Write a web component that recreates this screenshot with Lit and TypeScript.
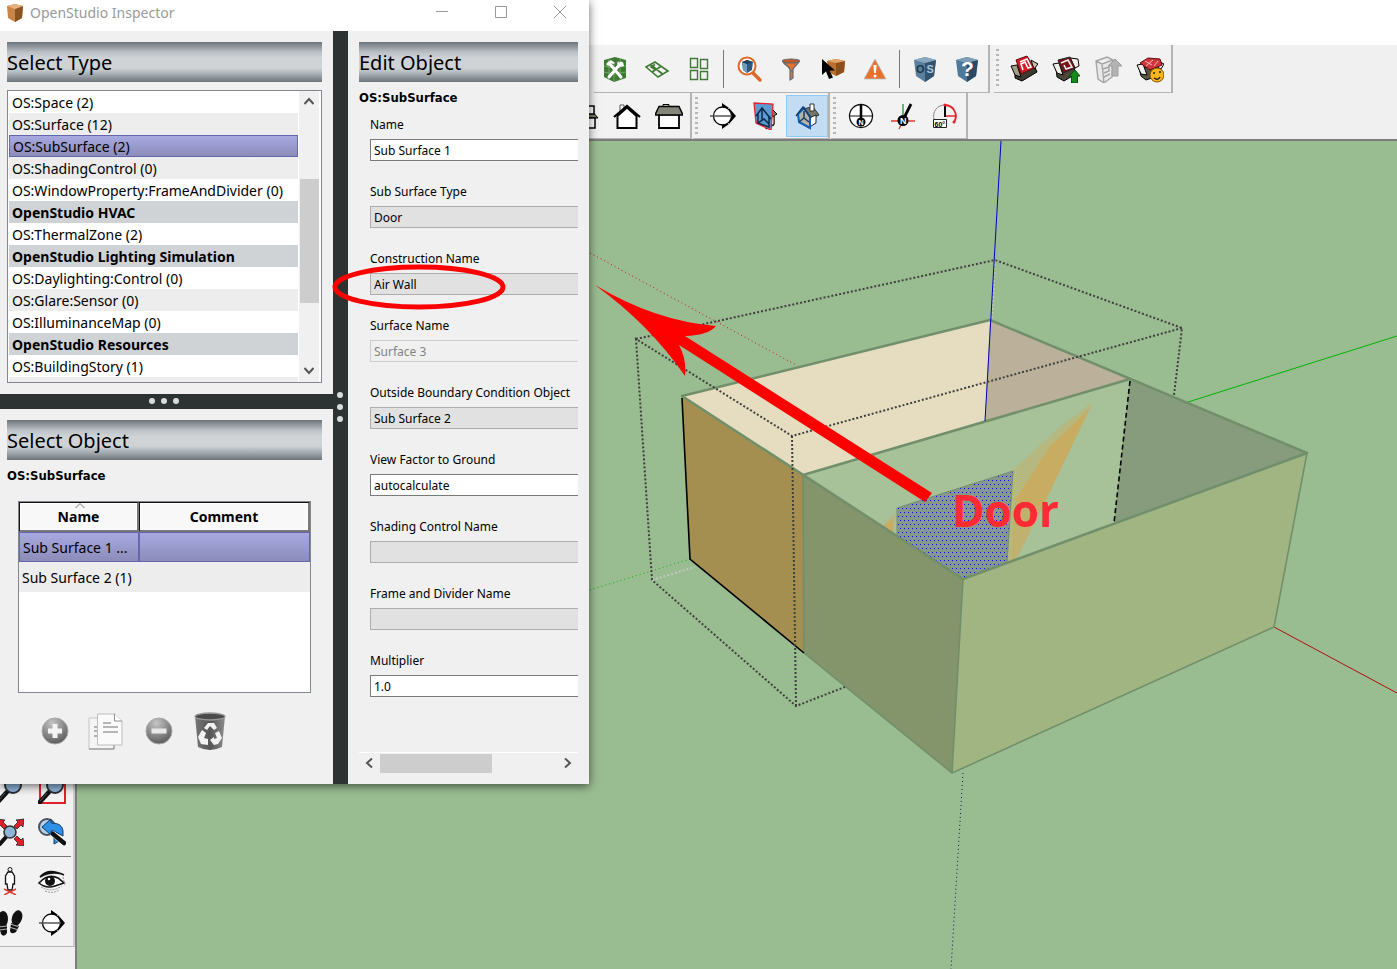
import { LitElement, html, css, svg, nothing } from "lit";
import { customElement, state } from "lit/decorators.js";
import { classMap } from "lit/directives/class-map.js";

const HOUSE_SIDE = svg`<path d="M4 12.500h20V26H4z" fill="#fff" stroke="#000" stroke-width="1.800"/><path d="M8 6V2.500h6V6" fill="#ddd" stroke="#000"/><path d="M4 4.500h20l4 8.500H0z" fill="#85867a" stroke="#000" stroke-width="1.400"/>`;

const MAGNIFIER = svg`<path d="M11 16 1 27" stroke="#111" stroke-width="4.500" stroke-linecap="round"/><path d="m9 17-7 8" stroke="#555" stroke-width="1"/><circle cx="17" cy="9" r="8" fill="#8fb4d8" stroke="#2b3036" stroke-width="2"/><path d="M12 8q2-5 7-4" fill="none" stroke="#d5e5f3" stroke-width="2"/>`;

const ICONS: Record<string, unknown> = {
  cubeTools: svg`<path d="M3 5 14 2l11 3v18l-12 4L3 22z" fill="#3f7a34"/><path d="M3 11l10 2 12-2M3 17l10 2 12-2M8 4v21M19 4v21M13 8v19" stroke="#7fae72" stroke-width=".8" fill="none"/><path d="m8 8 12 14M20 8 8 22" stroke="#fff" stroke-width="3" stroke-linecap="round"/><path d="M5 9l5-4 4 3-2 1-2-1-3 3zM17 6l2 3 3-2 1 4-4 1-3-3z" fill="#fff"/>`,
  mesh: svg`<path d="M3 12 12 7l13 9-10 6zM7.500 9.500l12 9.500M9 17l9-5.500M12 14.500 8 12l4-2.500" fill="none" stroke="#3f7a34" stroke-width="1.600"/>`,
  squares: svg`<path d="M5.500 3.500h7v9h-7zM15.500 4.500h7v9h-7zM5.500 15.500h7v9h-7zM15.500 16.500h7v8h-7z" fill="none" stroke="#3f7a34" stroke-width="1.400"/>`,
  magCube: svg`<path d="m18 18 7 7" stroke="#e0692a" stroke-width="3.500" stroke-linecap="round"/><circle cx="12" cy="11" r="8.500" fill="#fff" stroke="#e0692a" stroke-width="2"/><path d="m7 7 5-2 6 2-1 8-5 3-4-3z" fill="#31597e"/><path d="m7 7 5 2v9l-4-3z" fill="#6f9cc0"/><path d="m7 7 5-2 6 2-6 2z" fill="#243f59"/>`,
  funnel: svg`<path d="M6 6h16c0 4-6 5-6 9v8l-3 2V15c0-4-7-5-7-9z" fill="#e8702c" stroke="#56697a" stroke-width="1.100"/><ellipse cx="14" cy="6" rx="8.500" ry="2" fill="#c45a20" stroke="#56697a" stroke-width="1.200"/><path d="m13 15 1 1h2" stroke="#56697a" fill="none"/>`,
  selectCube: svg`<path d="m8 6 9-2 9 2-1 11-8 4-8-4z" fill="#b9702c"/><path d="m17 8 9-2-1 11-8 4z" fill="#8d4e1c"/><path d="m8 6 9-2 9 2-9 2z" fill="#e0a565"/><path d="M3 4v16l4-3.500L10 24l4-1.500-3.500-7H16z" fill="#000"/>`,
  warning: svg`<path d="M14 4 3 24h22z" fill="#e8702c" stroke="#b9bec2" stroke-width=".8"/><path d="M12.300 10h3.400l-.8 8h-1.800z" fill="#fff"/><circle cx="14" cy="21" r="1.500" fill="#fff"/>`,
  cubeOS: svg`<path d="m3 5 11-3 11 3-2 16-9 6-9-6z" fill="#5a7f9e"/><path d="m14 8 11-3-2 16-9 6z" fill="#33526d"/><path d="m3 5 11-3 11 3-11 3z" fill="#8aa9c0"/><text x="5" y="18" class="g" font-size="11" fill="#1d3448">O</text><text x="15.500" y="18" class="g" font-size="11" fill="#a7c3d8">S</text>`,
  cubeHelp: svg`<path d="m3 5 11-3 11 3-2 16-9 6-9-6z" fill="#4f7899"/><path d="m14 8 11-3-2 16-9 6z" fill="#2c4a64"/><path d="m3 5 11-3 11 3-11 3z" fill="#7f9fb8"/><text x="8" y="21" class="g" font-size="21" fill="#fff">?</text>`,
  box: svg`<path d="m5 13 19-3 3 7-15 9-7-3z" fill="#3d392e" stroke="#000"/><path d="m1 11 6-1 4 12-6-2z" fill="#a29c88" stroke="#000"/><path d="m21 5 7 4-4 5z" fill="#c9c3ad" stroke="#000"/><path d="m6 5 11-4 7 12-13 6z" fill="#d51c24" stroke="#5f0a0e"/><path d="m10 7 7-3 4 8-3 1-3-6-4 2 2 6" fill="none" stroke="#fff" stroke-width="1.600"/>`,
  boxUp: svg`<path d="m4 13 19-3-1 10-10 6-7-4z" fill="#4b4638" stroke="#000"/><path d="m1 9 6-1 4 12-6-2zM18 3l8 1 1 7-4 2z" fill="#f1efe8" stroke="#000"/><path d="m6 5 12-3 5 11-12 5z" fill="#77151a" stroke="#222"/><path d="m9 8 7-3 4 7-6 2-2-4" fill="none" stroke="#eee" stroke-width="1.600"/><path d="m23 15 5 6h-2.500v7h-6v-7H17z" fill="#178a1e" stroke="#04520a"/>`,
  boxGrey: svg`<path d="m2 6 11-4 6 3-1 17-8 6-6-4zM2 6l6 3 11-4M8 9l2 19M9 14l6-2v4l-5 2M10 22l6-3" fill="#e8e8e8" stroke="#a5a5a5" stroke-width="1.400"/><path d="m21 4 7 7h-4v10h-6V11h-4z" fill="#b3b3b3" stroke="#9c9c9c"/>`,
  boxFace: svg`<path d="m3 13 22-3-3 11-12 4-5-4z" fill="#5a5343" stroke="#000"/><path d="m1 10 6-1 4 11-6-1zM22 6l6 3-3 5-4-2z" fill="#eee" stroke="#000"/><path d="m4 8 8-5 12 1 2 6-12 5z" fill="#d1353b" stroke="#5f0a0e"/><path d="m9 6 7 4m-6 1 7-6m1 6 4-5" stroke="#f3b9bb"/><circle cx="21" cy="20" r="7" fill="#fbb51c" stroke="#7e5300"/><path d="M17 18h2m4-1h2m-7 6q4 3 6-1" stroke="#222" stroke-width="1.500" fill="none"/>`,
  houseTall: svg`<path d="M3 15 7 9h14l6 7H2z" fill="#77786a" stroke="#000"/><path d="M4 16h20v10H4zM14 4h9v8h-9z" fill="#fff" stroke="#000" stroke-width="1.500"/>`,
  houseFront: svg`<path d="M7 3h4v7H7z" fill="#fff" stroke="#555"/><path d="M4.500 14v12h19V14L14 5.500z" fill="#fff" stroke="#000" stroke-width="2"/><path d="M1 15 14 4l13 11" fill="none" stroke="#000" stroke-width="2.200"/>`,
  houseSide: HOUSE_SIDE,
  section: svg`<path d="m13 1 7 5-7 1zM27 14l-7-8v16zM13 27l7-5-7-1z" fill="#000"/><circle cx="13.500" cy="14" r="9" fill="#fff" stroke="#000" stroke-width="1.300"/><path d="M1 14h22" stroke="#555" stroke-width="1.500"/>`,
  sectionPlane: svg`<path d="m14 11 6-5 6 6-3 2v9l-8 4z" fill="#777867" stroke="#111"/><path d="m17 17 6-3v8l-6 4z" fill="#fff" stroke="#111"/><path d="m3 1 19 1-2 26-15-7z" fill="#5c9bd2" stroke="#e6222e" stroke-width="1.300"/><path d="m5 14 6-8 9 11M7 12v9l11 4V15M7 21l6-4 5 5M11 7v11" fill="none" stroke="#0d2a48" stroke-width="1.500"/>`,
  sectionCut: svg`<path d="m9 7 11-2 6 8-9 4z" fill="#777867" stroke="#333"/><path d="m16 16 7-3v8l-8 5z" fill="#fff" stroke="#222"/><path d="M17 2h4v7h-4z" fill="#fff" stroke="#333"/><path d="m5 12 6-6 6 9v11L6 20z" fill="#b9b1a4" stroke="#0d61b3" stroke-width="2"/><path d="m3 14 7-9 8 11M6 20l5-4 5 4M11 9v7" fill="none" stroke="#12406e" stroke-width="1.500"/>`,
  north: svg`<circle cx="14" cy="14" r="11.500" fill="#fff" stroke="#111" stroke-width="1.300"/><path d="M2 14h24" stroke="#111"/><path d="M14 2v16" stroke="#000" stroke-width="2.500"/><circle cx="14" cy="20" r="4.500" fill="#000"/><text x="11.500" y="22.500" class="g" font-size="7" fill="#fff">N</text>`,
  northTool: svg`<path d="M14 2v14" stroke="#6cb36c" stroke-width="2"/><path d="M2 19h24M14 19l-4 8" stroke="#e23b30" stroke-width="1.300"/><path d="m15 16 7-14" stroke="#000" stroke-width="2.800"/><circle cx="14" cy="18.500" r="5.500" fill="#000"/><text x="11" y="22" class="g" font-size="9" fill="#fff">N</text>`,
  northAngle: svg`<path d="M3 17a11 11 0 0 1 11-14" fill="none" stroke="#888"/><path d="M14 3a11 11 0 0 1 9 17" fill="none" stroke="#e6222e" stroke-width="1.800"/><path d="M14 14h11" stroke="#e6222e" stroke-width="1.500"/><path d="M14 3v12" stroke="#000" stroke-width="2"/><circle cx="14" cy="3" r="1.500" fill="#e6222e"/><circle cx="23" cy="20" r="1.500" fill="#e6222e"/><path d="M2.500 17.500h13v8h-13z" fill="#fff" stroke="#222"/><text x="3.500" y="24.500" class="g" font-size="7" fill="#000">60°</text>`,
  zoom: MAGNIFIER,
  zoomWindow: svg`<path d="M2 2v25h25V2" fill="none" stroke="#e3202a" stroke-width="2"/>${MAGNIFIER}`,
  zoomExtents: svg`<path d="m28 1-8 1 2 2-4 4 3 3 4-4 2 2zM1 1l8 1-2 2 4 4-3 3-4-4-2 2zM28 28l-8-1 2-2-4-4 3-3 4 4 2-2z" fill="#e3202a" stroke="#222" stroke-width=".8"/><path d="M11 18 3 27" stroke="#111" stroke-width="4"/><circle cx="14" cy="14" r="6" fill="#8fb4d8" stroke="#333" stroke-width="1.600"/>`,
  zoomPrevious: svg`<circle cx="9" cy="9" r="8" fill="#b5d0e8" stroke="#4a5560" stroke-width="2"/><path d="m4 9 9-8v4c8 0 12 3 12 9v4l-9-5-3 0v4zM16 18l7 4-7 4z" fill="#2d8fe6" stroke="#103a66"/><path d="m14 15 13 11" stroke="#fff" stroke-width="5.500"/><path d="m15 16 11 9" stroke="#111" stroke-width="4.500" stroke-linecap="round"/>`,
  person: svg`<circle cx="14" cy="2.500" r="2" fill="#fff" stroke="#111"/><path d="M12 5h4l2.500 4v8H17l-1 6h-4l-1-6H9.500V9z" fill="#fff" stroke="#111" stroke-width="1.300"/><path d="m8 22 12 6M20 22 8 28" stroke="#e23b30" stroke-width="1.400"/>`,
  eye: svg`<path d="M2 10Q10 0 26 8L24 7Q12 4 2 10z" fill="#111" stroke="#111" stroke-width="1.500"/><path d="M1 16Q10 6 20 11l6 5-9 3Q8 22 1 16z" fill="#fff" stroke="#111" stroke-width="1.600"/><circle cx="12" cy="14" r="5" fill="#111"/><circle cx="11" cy="12" r="1.300" fill="#fff"/><path d="M3 20q10 6 21-1M7 24q8 3 14-1M25 10l2 9" fill="none" stroke="#999" stroke-dasharray="2 1"/>`,
  steps: svg`<ellipse cx="7" cy="10" rx="5" ry="8" fill="#111"/><path d="m3 17 8-1v8q-3 5-6 1z" fill="#111"/><ellipse cx="21" cy="9" rx="5" ry="8" fill="#111" transform="rotate(18 21 9)"/><path d="m15 14 8 3-3 6q-5 3-6-1z" fill="#111"/><path d="m14 15 8 2.500M13 18l8 2.500M3 18l8-1M3 21l8-1" stroke="#ddd" stroke-width=".8"/>`,
  add: svg`<circle cx="14" cy="14" r="13" fill="url(#ball)" stroke="#a9a9a9"/><path d="M14 7v14M7 14h14" stroke="#f4f4f4" stroke-width="5"/>`,
  remove: svg`<circle cx="14" cy="14" r="13" fill="url(#ball)" stroke="#a9a9a9"/><path d="M6.500 14h15" stroke="#e8e8e8" stroke-width="5"/>`,
  copy: svg`<path d="M1 6h25v31H1z" fill="#f5f5f5" stroke="#c4c4c4"/><path d="M26 6v31H1" fill="none" stroke="#888"/><path d="M6 15h4M6 19h4M6 24h4" stroke="#9a9a9a" stroke-width="1.500"/><path d="M9.500 2h17l7.500 7v24H9.500z" fill="#fafafa" stroke="#bdbdbd"/><path d="M26.500 2v7H34" fill="#fff" stroke="#8e8e8e"/><path d="M15 11h8M15 15h15M15 20h15" stroke="#a0a0a0" stroke-width="1.500"/>`,
  trash: svg`<path d="M3 4h30l-3 31q-12 6-24 0z" fill="url(#bin)"/><ellipse cx="18" cy="4.500" rx="15" ry="3.500" fill="#4b4b4b" stroke="#9b9b9b" stroke-width="1.300"/><path d="m12 16 4-5h6l3 5-3 2-4-4-3 4zM6 25l4-7 4 3-2 5 4 1v6l-7-1zM22 33l-4-5 4-3v2l3-1-2-5 4-2 3 7-4 6z" fill="#f2f2f2"/>`,
};

const glyph = (name: string, size = 28, box = 28) =>
  html`<svg class="glyph" width=${size} height=${size} viewBox="0 0 ${box} ${box}" aria-hidden="true">${ICONS[name]}</svg>`;

type Tool = { icon: string; label: string; active?: boolean } | "divider";

@customElement("tool-strip")
export class ToolStrip extends LitElement {
  static properties = { tools: { attribute: false }, grip: { type: Boolean } };
  declare tools: Tool[];
  declare grip: boolean;

  static styles = css`
    :host { display: flex; align-items: center; background: #f2f2f2; border-right: 2px solid #b4b4b4; border-bottom: 1px solid #b4b4b4; box-sizing: border-box; }
    .grip { width: 3px; align-self: stretch; margin: 4px 4px 4px 2px; background: repeating-linear-gradient(#b5b5b5 0 2px, transparent 2px 5px); }
    .tool { width: 42px; height: 42px; padding: 0; border: 1px solid transparent; background: none; display: grid; place-items: center; }
    .tool.active { background: #c2dcf3; border-color: #90c8f6; }
    .divider { width: 1px; height: 38px; margin: 0 4px 0 3px; background: #777; }
    .g { font-family: "Liberation Sans", sans-serif; font-weight: 700; }
  `;

  render() {
    return html`
      ${this.grip ? html`<span class="grip"></span>` : nothing}
      ${this.tools.map((t) =>
        t === "divider"
          ? html`<span class="divider"></span>`
          : html`<button class=${classMap({ tool: true, active: !!t.active })} aria-label=${t.label}>${glyph(t.icon)}</button>`
      )}
    `;
  }
}

@customElement("model-view")
export class ModelView extends LitElement {
  static styles = css`
    :host { display: block; position: relative; overflow: hidden; background: #9abc91; }
    .scene { position: absolute; inset: 0; width: 100%; height: 100%; }
    .edge { fill: none; stroke: #728f6c; stroke-width: 2.5; stroke-linejoin: round; }
    .edge.thin { stroke-width: 1.6; }
    .dark { fill: none; stroke: #000; stroke-width: 1.6; }
    .bounds { fill: none; stroke: #40403f; stroke-width: 2; stroke-dasharray: 2 2; }
    .hidden { fill: none; stroke: #c2c8bf; stroke-width: 2; stroke-dasharray: 2 2; }
    .axis { fill: none; stroke-width: 1; }
    .note { font: 700 44px "Open Sans", "Noto Sans", sans-serif; fill: #ff2a34; }
  `;

  render() {
    return html`
      <svg class="scene" viewBox="77 141 1320 828" preserveAspectRatio="xMinYMin slice" role="img" aria-label="3D model">
        <defs>
          <pattern id="dots" width="4" height="8" patternUnits="userSpaceOnUse">
            <rect width="4" height="8" fill="#86978f" />
            <rect width="1" height="1" fill="#0000ff" />
            <rect x="2" y="4" width="1" height="1" fill="#0000ff" />
          </pattern>
        </defs>
        <path class="axis" stroke="#c8102c" stroke-dasharray="1 3" d="M590 253 796 365" />
        <path class="axis" stroke="#00b400" stroke-dasharray="1 3" d="M590 590 690 559" />
        <path class="axis" stroke="#00b400" d="M1188 402 1397 336" />
        <path class="axis" stroke="#b01010" d="M1274 627 1397 693" />
        <path class="axis" stroke="#101060" stroke-dasharray="1 3" d="M963 773 951 969" />
        <path class="hidden" d="M652 580 695 567M995 260 992 320" />
        <path fill="#e6dcbf" d="M682 396 990 320 985 421 803 475z" />
        <path fill="#bbb19b" d="M990 320 1130 379 985 421z" />
        <path fill="#a7c198" d="M803 475 1130 379 1114 523 963 579z" />
        <path fill="#879b7d" d="M1130 379 1307 453 1114 523z" />
        <path fill="#c8ac62" fill-opacity=".45" d="M1093 402 1061 426 1013 470 1007 562 1016 560zM895 513 881 527 894 536z" />
        <path fill="#c8ac62" d="M1090 408 1050 446 1015 500 1032 510 1046 500zM882 527 893 519 893 535z" />
        <path fill="#c8ac62" fill-opacity=".6" d="M1015 500 1046 500 1018 556 1011 562z" />
        <path fill="url(#dots)" d="M897 508 1013 471 1007 563 963 579 897 537z" />
        <path fill="none" stroke="#728f6c" d="M897 537V508L1013 471 1007 563" />
        <path fill="#a48f50" d="M682 396 803 475 804 653 690 559z" />
        <path fill="#84946b" d="M803 475 963 579 952 773 804 653z" />
        <path fill="#a1b582" d="M963 579 1307 453 1274 627 952 773z" />
        <path class="edge" d="M682 396 990 320 1307 453 963 579zM803 475 1130 379" />
        <path class="edge thin" d="M803 475 804 653 952 773 1274 627 1307 453M963 579 952 773" />
        <path class="dark" d="M682 398 690 559 804 653" />
        <path class="dark" stroke-dasharray="5 3" d="M1130 381 1114 523" />
        <path class="axis" stroke="#0000c0" d="M1001 141 985 421" />
        <path class="bounds" d="M636 339 995 260 1182 328 1174 395" />
        <path class="bounds" d="M1182 328 792 436 636 339 652 580 796 706 845 687M792 436 796 706" />
        <text class="note" x="952" y="527">Door</text>
        <path fill="#f00" d="M595 285Q655 321 716 326 709 335 685 336L932 493 925 502 679 345Q687 360 685 376 650 325 595 285z" />
      </svg>
    `;
  }
}

type Field = { id: string; label: string; value: string; kind: "text" | "choice" | "locked" };

@customElement("inspector-window")
export class InspectorWindow extends LitElement {
  @state() private selectedType = "OS:SubSurface (2)";

  private types = [
    "OS:Space (2)", "OS:Surface (12)", "OS:SubSurface (2)", "OS:ShadingControl (0)", "OS:WindowProperty:FrameAndDivider (0)",
    "#OpenStudio HVAC", "OS:ThermalZone (2)", "#OpenStudio Lighting Simulation", "OS:Daylighting:Control (0)",
    "OS:Glare:Sensor (0)", "OS:IlluminanceMap (0)", "#OpenStudio Resources", "OS:BuildingStory (1)",
  ];
  private shaded = ["OS:Surface (12)", "OS:ShadingControl (0)", "OS:Glare:Sensor (0)"];

  private fields: Field[] = [
    { id: "name", label: "Name", value: "Sub Surface 1", kind: "text" },
    { id: "type", label: "Sub Surface Type", value: "Door", kind: "choice" },
    { id: "construction", label: "Construction Name", value: "Air Wall", kind: "choice" },
    { id: "surface", label: "Surface Name", value: "Surface 3", kind: "locked" },
    { id: "boundary", label: "Outside Boundary Condition Object", value: "Sub Surface 2", kind: "choice" },
    { id: "view", label: "View Factor to Ground", value: "autocalculate", kind: "text" },
    { id: "shading", label: "Shading Control Name", value: "", kind: "choice" },
    { id: "frame", label: "Frame and Divider Name", value: "", kind: "choice" },
    { id: "multiplier", label: "Multiplier", value: "1.0", kind: "text" },
  ];

  static styles = css`
    :host { display: flex; flex-direction: column; background: #f0f0f0; box-shadow: 0 2px 9px rgba(0, 0, 0, 0.6); font: 14px/22px "Noto Sans", "Open Sans", sans-serif; color: #000; }
    * { box-sizing: border-box; }
    button, input, select { font: inherit; color: inherit; margin: 0; padding: 0; border-radius: 0; }
    button { border: 0; background: none; }
    .defs { position: absolute; width: 0; height: 0; }
    .title { display: flex; align-items: center; height: 31px; background: #fff; color: #999; padding-left: 5px; }
    .title .logo { margin: -6px 5px 0 0; }
    .title h1 { flex: 1; margin: -6px 0 0; font: inherit; }
    .title button { width: 59px; height: 24px; display: grid; place-items: center; align-self: start; }
    .body { flex: 1; display: grid; grid-template-columns: 333px 15px 1fr; min-height: 0; }
    .left { display: grid; grid-template-rows: 363px 15px 1fr; }
    .bar { background: #2d3233; display: flex; align-items: center; justify-content: center; gap: 6px; padding: 0 6px 1px 0; }
    .bar.down { flex-direction: column; padding: 0 1px 2px 0; }
    .bar i { width: 6px; height: 6px; border-radius: 50%; background: #d8dbdd; }
    .pane { padding: 11px 11px 11px 7px; display: flex; flex-direction: column; min-height: 0; }
    .band { flex: none; height: 40px; margin: 0; font: 20px/42px "Noto Sans", sans-serif; background: linear-gradient(#6c757b, #b9bfc4 25%, #cfd3d6 40%, #cfd3d6 65%, #a8afb4 80%, #6c757b); }
    .class-name { margin: 5px 0 0; font: 700 13px/22px "DejaVu Sans Condensed", "Noto Sans", sans-serif; height: 20px; }

    .types { flex: 1; display: flex; margin-top: 8px; border: 1px solid #828790; background: #fff; overflow: hidden; }
    .types ul { flex: 1; list-style: none; margin: 0 0 0 1px; padding: 0; white-space: nowrap; min-width: 0; }
    .types li { height: 22px; padding-left: 3px; line-height: 24px; }
    .types button { display: block; width: 100%; text-align: left; height: 22px; line-height: 24px; }
    .types li.heading { background: #cfd3d6; font-weight: 700; }
    .types li.shaded { background: #ededed; }
    .types li.current { background: linear-gradient(#a8a9e0, #8b8cb9); border: 1px solid #6566ad; }
    .types li.current button { height: 20px; line-height: 22px; }
    .vscroll { width: 20px; margin: 0 2px 0 1px; background: #f0f0f0; display: flex; flex-direction: column; align-items: center; padding: 5px 0 6px; }
    .vscroll .thumb { width: 19px; height: 124px; margin: 73px 0 auto; background: #cdcdcd; }

    .objects { flex: none; height: 192px; margin: 16px 0 0 11px; width: 293px; border: 1px solid #828790; background: #fff; }
    table { width: 100%; border-collapse: separate; border-spacing: 0; table-layout: fixed; }
    th { position: relative; height: 30px; padding: 0; font-weight: 700; background: #f8f8f8; border: 1px solid #111; border-right: 2px solid #777; border-bottom: 2px solid #777; box-shadow: inset 0 0 0 1px #fff; }
    th:first-child { width: 120px; }
    .sort { position: absolute; top: 0; left: 55px; }
    td { height: 30px; padding: 1px 0 0 3px; line-height: 24px; white-space: nowrap; background: #ededed; }
    .picked td { background: linear-gradient(#a8a9e0, #8b8cb9); border: 1px solid #6566ad; }
    .actions { display: flex; margin: 18px 0 0 22px; }
    .actions button { width: 52px; height: 40px; display: grid; place-items: center; }

    .edit { padding: 11px; }
    .form { flex: 1; padding-left: 11px; font: 12px/16px "Noto Sans", sans-serif; }
    .field { height: 67px; padding-top: 10px; display: flex; flex-direction: column; gap: 6px; }
    .field label { height: 16px; white-space: nowrap; }
    .field input, .field select { appearance: none; width: 100%; height: 22px; padding: 1px 3px 0; border: 1px solid #7a7a7a; border-right: 0; background: #fff; outline: 0; }
    .field select { background: #e1e1e1; border-color: #adadad; opacity: 1; }
    .field input:disabled { background: #f0f0f0; border-color: #ccc; color: #838383; }
    .hscroll { flex: none; height: 21px; border-top: 1px solid #fff; display: flex; align-items: center; padding: 0 5px; justify-content: space-between; }
    .hscroll .thumb { width: 112px; height: 19px; margin: 0 auto 0 6px; background: #cdcdcd; }
    .ring { position: absolute; left: 330px; top: 262px; pointer-events: none; }
  `;

  private control(f: Field) {
    if (f.kind === "choice")
      return html`<select id=${f.id}><option>${f.value}</option></select>`;
    return html`<input id=${f.id} .value=${f.value} ?disabled=${f.kind === "locked"} />`;
  }

  private chevron(d: string) {
    return html`<svg width="10" height="10" viewBox="0 0 10 10" aria-hidden="true"><path d=${d} fill="none" stroke="#555" stroke-width="2" /></svg>`;
  }

  render() {
    return html`
      <header class="title">
        <svg class="logo" width="20" height="20" viewBox="0 0 20 20" aria-hidden="true">
          <path d="M2 3 10 1l8 2-1 12-7 4-7-4z" fill="#c98448" /><path d="m10 6 8-3-1 12-7 4z" fill="#8d5222" /><path d="M2 3 10 1l8 2-8 3z" fill="#e7b27c" />
        </svg>
        <h1>OpenStudio Inspector</h1>
        <button aria-label="Minimize"><svg width="12" height="12"><path d="M0 5.500h12" stroke="#999" /></svg></button>
        <button aria-label="Maximize"><svg width="12" height="12"><path d="M.5.500h11v11H.5z" fill="none" stroke="#999" /></svg></button>
        <button aria-label="Close"><svg width="12" height="12"><path d="m0 0 12 12M12 0 0 12" stroke="#999" /></svg></button>
      </header>
      <div class="body">
        <div class="left">
          <section class="pane">
            <h2 class="band">Select Type</h2>
            <div class="types">
              <ul>
                ${this.types.map((t) =>
                  t[0] === "#"
                    ? html`<li class="heading">${t.slice(1)}</li>`
                    : html`<li class=${classMap({ current: t === this.selectedType, shaded: this.shaded.includes(t) })}>
                        <button @click=${() => (this.selectedType = t)}>${t}</button>
                      </li>`
                )}
                <li class="shaded"></li>
              </ul>
              <div class="vscroll">
                ${this.chevron("M.5 8 5 3l4.500 5")}
                <span class="thumb"></span>
                ${this.chevron("M.5 2 5 7l4.500-5")}
              </div>
            </div>
          </section>
          <div class="bar"><i></i><i></i><i></i></div>
          <section class="pane">
            <h2 class="band">Select Object</h2>
            <p class="class-name">OS:SubSurface</p>
            <div class="objects">
              <table>
                <thead>
                  <tr>
                    <th><svg class="sort" width="10" height="6" aria-hidden="true"><path d="M.5 5 5 .5 9.500 5" fill="none" stroke="#777" /></svg>Name</th>
                    <th>Comment</th>
                  </tr>
                </thead>
                <tbody>
                  <tr class="picked"><td>Sub Surface 1 ...</td><td></td></tr>
                  <tr><td colspan="2">Sub Surface 2 (1)</td></tr>
                </tbody>
              </table>
            </div>
            <div class="actions">
              <button aria-label="Add">${glyph("add")}</button>
              <button aria-label="Copy">${glyph("copy", 38, 38)}</button>
              <button aria-label="Remove">${glyph("remove")}</button>
              <button aria-label="Purge">${glyph("trash", 38, 38)}</button>
            </div>
          </section>
        </div>
        <div class="bar down"><i></i><i></i><i></i></div>
        <section class="pane edit">
          <h2 class="band">Edit Object</h2>
          <p class="class-name">OS:SubSurface</p>
          <div class="form">
            ${this.fields.map((f) => html`<div class="field"><label for=${f.id}>${f.label}</label>${this.control(f)}</div>`)}
          </div>
          <div class="hscroll">
            ${this.chevron("M8 .5 3 5l5 4.500")}
            <span class="thumb"></span>
            ${this.chevron("M2 .5 7 5 2 9.500")}
          </div>
        </section>
      </div>
      <svg class="ring" width="178" height="50" aria-hidden="true"><ellipse cx="89" cy="25" rx="84" ry="20" fill="none" stroke="#f00" stroke-width="5" /></svg>
      <svg class="defs" aria-hidden="true">
        <defs>
          <radialGradient id="ball" cx=".4" cy=".2" r=".9"><stop offset="0" stop-color="#c4c4c4" /><stop offset="1" stop-color="#505050" /></radialGradient>
          <linearGradient id="bin"><stop offset="0" stop-color="#777" /><stop offset=".5" stop-color="#555" /><stop offset="1" stop-color="#8c8c8c" /></linearGradient>
        </defs>
      </svg>
    `;
  }
}

@customElement("app-root")
export class AppRoot extends LitElement {
  static styles = css`
    :host { display: grid; grid-template-rows: 45px 48px 48px 1fr; position: relative; min-height: 100vh; overflow: hidden; background: #f0f0f0; font-family: "Noto Sans", sans-serif; --inspector: 589px; }
    .menu { background: #fff; }
    .row { display: flex; gap: 4px; }
    .row.upper { padding-left: calc(var(--inspector) + 5px); }
    .row.lower { padding-left: calc(var(--inspector) - 25px); border-bottom: 2px solid #7c7c7c; gap: 1px; }
    .main { display: grid; grid-template-columns: 77px 1fr; min-height: 0; }
    .palette { display: flex; flex-direction: column; justify-content: end; border-right: 2px solid #7e7e7e; padding-bottom: 22px; overflow: hidden; }
    .tools { display: grid; grid-template-columns: 42px 42px; justify-content: end; border-right: 2px solid #ccc; border-bottom: 1px solid #b4b4b4; background: #f2f2f2; padding-bottom: 2px; }
    .tools button { height: 42px; padding: 0; border: 0; background: none; display: grid; place-items: center; }
    .tools hr { grid-column: 1 / -1; width: 100%; height: 1px; margin: 3px 0 3px -2px; border: 0; background: #777; }
    .inspector { position: absolute; left: 0; top: 0; width: var(--inspector); height: 784px; }
  `;

  private main: Tool[] = [
    { icon: "cubeTools", label: "Extensions" }, { icon: "mesh", label: "Surface matching" }, { icon: "squares", label: "Project loose geometry" },
    "divider",
    { icon: "magCube", label: "Inspector" }, { icon: "funnel", label: "Search surfaces" }, { icon: "selectCube", label: "Select" }, { icon: "warning", label: "Warnings" },
    "divider",
    { icon: "cubeOS", label: "Launch OpenStudio" }, { icon: "cubeHelp", label: "Help" },
  ];
  private store: Tool[] = [
    { icon: "box", label: "Get models" }, { icon: "boxUp", label: "Share model" }, { icon: "boxGrey", label: "Share component" }, { icon: "boxFace", label: "Extension warehouse" },
  ];
  private views: Tool[] = [
    { icon: "houseTall", label: "Left view" }, { icon: "houseFront", label: "Front view" }, { icon: "houseSide", label: "Back view" },
  ];
  private sections: Tool[] = [
    { icon: "section", label: "Section plane" }, { icon: "sectionPlane", label: "Display section planes" }, { icon: "sectionCut", label: "Display section cuts", active: true },
  ];
  private norths: Tool[] = [
    { icon: "north", label: "Toggle north arrow" }, { icon: "northTool", label: "Set north" }, { icon: "northAngle", label: "Enter north angle" },
  ];

  render() {
    const pal = (icon: string, label: string) => html`<button aria-label=${label}>${glyph(icon)}</button>`;
    return html`
      <div class="menu"></div>
      <div class="row upper">
        <tool-strip .tools=${this.main}></tool-strip>
        <tool-strip grip .tools=${this.store}></tool-strip>
      </div>
      <div class="row lower">
        <tool-strip .tools=${this.views}></tool-strip>
        <tool-strip grip .tools=${this.sections}></tool-strip>
        <tool-strip grip .tools=${this.norths}></tool-strip>
      </div>
      <div class="main">
        <aside class="palette">
          <div class="tools">
            ${pal("zoom", "Zoom")}${pal("zoomWindow", "Zoom window")}
            ${pal("zoomExtents", "Zoom extents")}${pal("zoomPrevious", "Previous")}
            <hr />
            ${pal("person", "Position camera")}${pal("eye", "Look around")}
            ${pal("steps", "Walk")}${pal("section", "Section plane")}
          </div>
        </aside>
        <model-view></model-view>
      </div>
      <inspector-window class="inspector"></inspector-window>
    `;
  }
}
